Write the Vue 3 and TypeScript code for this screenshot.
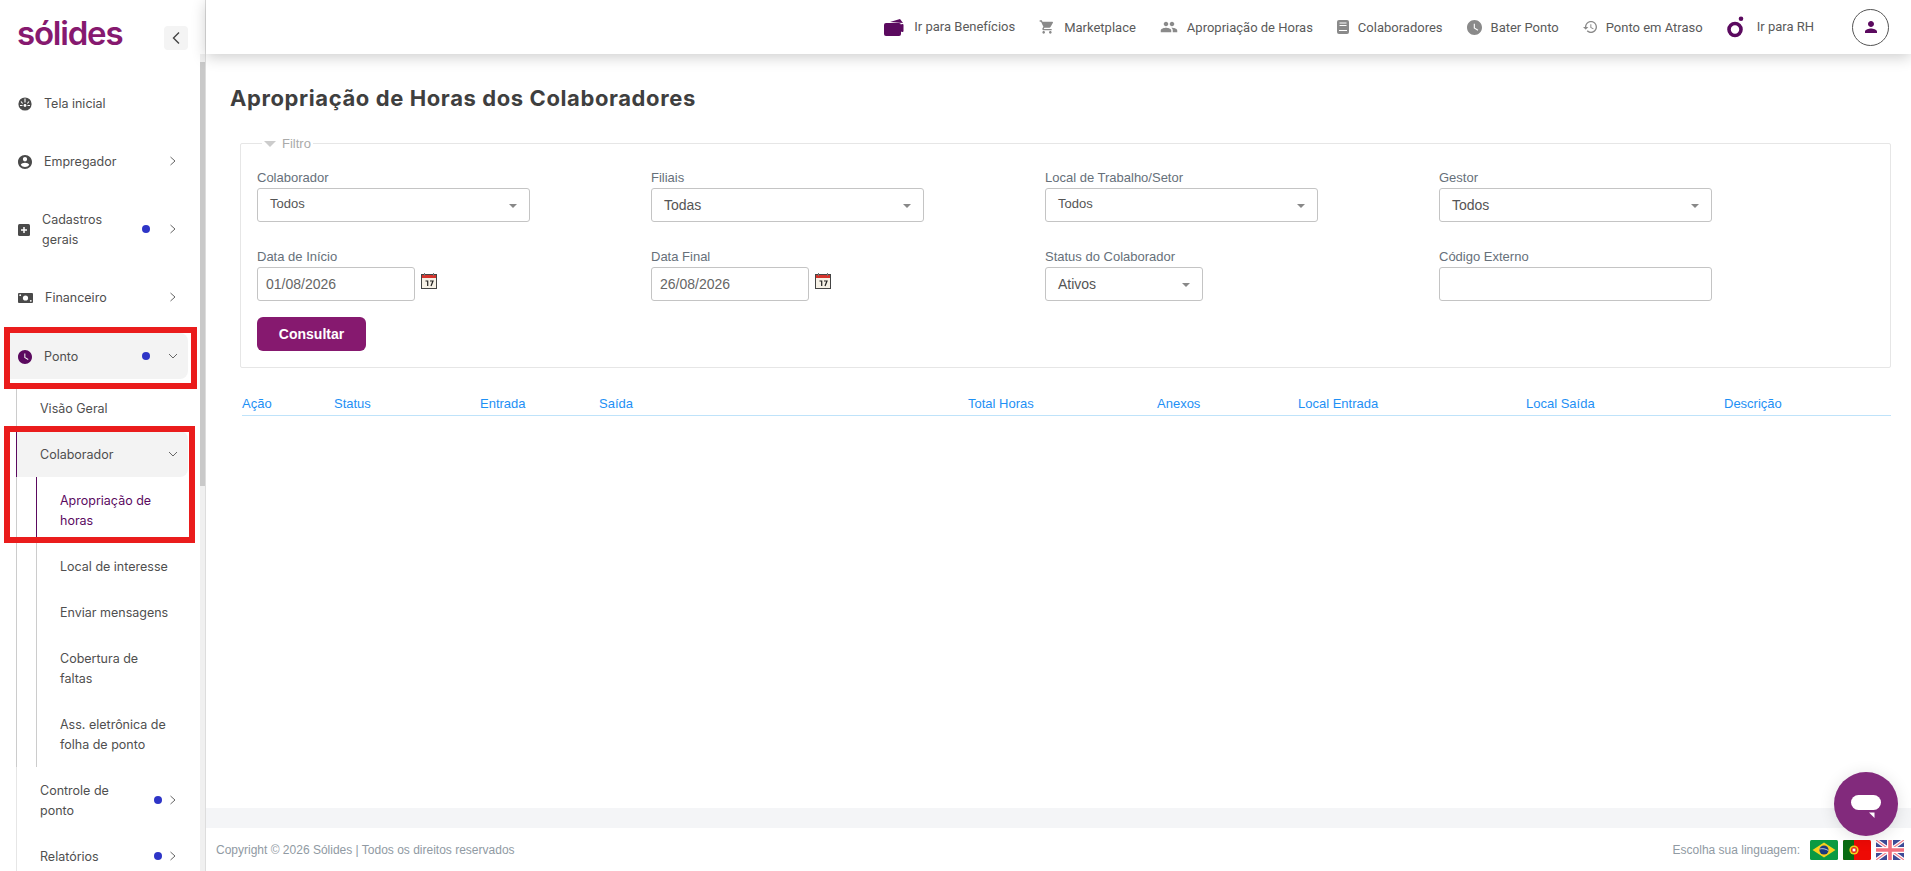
<script setup lang="ts">
type SideItem = {
  label: string
  icon?: string
  dot?: boolean
  chevron?: 'right' | 'down'
  active?: boolean
}

const topItems: SideItem[] = [
  { label: 'Tela inicial', icon: 'gauge' },
  { label: 'Empregador', icon: 'user', chevron: 'right' },
  { label: 'Cadastros gerais', icon: 'plus', dot: true, chevron: 'right' },
  { label: 'Financeiro', icon: 'money', chevron: 'right' }
]

const subItems = ['Local de interesse', 'Enviar mensagens', 'Cobertura de faltas', 'Ass. eletrônica de folha de ponto']

const headers = [
  { label: 'Ação', width: 92 },
  { label: 'Status', width: 146 },
  { label: 'Entrada', width: 119 },
  { label: 'Saída', width: 369 },
  { label: 'Total Horas', width: 189 },
  { label: 'Anexos', width: 141 },
  { label: 'Local Entrada', width: 228 },
  { label: 'Local Saída', width: 198 },
  { label: 'Descrição', width: 120 }
]

const cart = 'M7 18c-1.1 0-1.99.9-1.99 2S5.9 22 7 22s2-.9 2-2-.9-2-2-2zM1 2v2h2l3.6 7.59-1.35 2.45c-.16.28-.25.61-.25.96 0 1.1.9 2 2 2h12v-2H7.42c-.14 0-.25-.11-.25-.25l.03-.12.9-1.63h7.45c.75 0 1.41-.41 1.75-1.03l3.58-6.49c.08-.14.12-.31.12-.48 0-.55-.45-1-1-1H5.21l-.94-2H1zm16 16c-1.1 0-1.99.9-1.99 2s.89 2 1.99 2 2-.9 2-2-.9-2-2-2z'
const people = 'M16 11c1.66 0 2.99-1.34 2.99-3S17.66 5 16 5c-1.66 0-3 1.34-3 3s1.34 3 3 3zm-8 0c1.66 0 2.99-1.34 2.99-3S9.66 5 8 5C6.34 5 5 6.34 5 8s1.34 3 3 3zm0 2c-2.33 0-7 1.17-7 3.5V19h14v-2.5c0-2.33-4.67-3.5-7-3.5zm8 0c-.29 0-.62.02-.97.05 1.16.84 1.97 1.97 1.97 3.45V19h6v-2.5c0-2.33-4.67-3.5-7-3.5z'
const clock = 'M12 2C6.47 2 2 6.48 2 12s4.47 10 10 10 10-4.48 10-10S17.53 2 12 2zm4.2 14.2L11 13V7h1.5v5.25l4.5 2.67-.8 1.28z'
const history = 'M13 3c-4.97 0-9 4.03-9 9H1l3.89 3.89.07.14L9 12H6c0-3.87 3.13-7 7-7s7 3.13 7 7-3.13 7-7 7c-1.93 0-3.68-.79-4.94-2.06l-1.42 1.42C8.27 19.99 10.51 21 13 21c4.97 0 9-4.03 9-9s-4.03-9-9-9zm-1 5v5l4.28 2.54.72-1.21-3.5-2.08V8H12z'
const person = 'M12 12c2.21 0 4-1.79 4-4s-1.79-4-4-4-4 1.79-4 4 1.79 4 4 4zm0 2c-2.67 0-8 1.34-8 4v2h16v-2c0-2.66-5.33-4-8-4z'
const userCircle = 'M12 2C6.48 2 2 6.48 2 12s4.48 10 10 10 10-4.48 10-10S17.52 2 12 2zm0 3c1.66 0 3 1.34 3 3s-1.34 3-3 3-3-1.34-3-3 1.34-3 3-3zm0 14.2c-2.5 0-4.71-1.28-6-3.22.03-1.99 4-3.08 6-3.08 1.99 0 5.97 1.09 6 3.08-1.29 1.94-3.5 3.22-6 3.22z'
</script>

<template>
  <div class="app">
    <aside class="sidebar">
      <div class="brand">
        <span class="logo">sólides</span>
        <button class="collapse">
          <svg width="10" height="14" viewBox="0 0 10 14"><path d="M8 1.5 2.5 7 8 12.5" fill="none" stroke="#444" stroke-width="1.4" /></svg>
        </button>
      </div>
      <nav class="menu">
        <div v-for="item in topItems" :key="item.label" class="menu-item">
          <span class="menu-icon">
            <svg v-if="item.icon === 'gauge'" width="14" height="14" viewBox="0 0 14 14">
              <circle cx="7" cy="7" r="6.6" fill="#4a4a4a" />
              <path d="M7 1.5v4M3 4.5l1.6 2M11 4.5 9.4 6.5M2 8.5h2.5M9.5 8.5H12" stroke="#fff" stroke-width="1.1" />
              <circle cx="7" cy="8.5" r="1.4" fill="#fff" />
            </svg>
            <svg v-else-if="item.icon === 'user'" width="14" height="14" viewBox="2 2 20 20"><path :d="userCircle" fill="#4a4a4a" /></svg>
            <svg v-else-if="item.icon === 'plus'" width="12" height="12" viewBox="0 0 12 12">
              <rect width="12" height="12" rx="1.5" fill="#4a4a4a" />
              <path d="M6 3v6M3 6h6" stroke="#fff" stroke-width="1.5" />
            </svg>
            <svg v-else width="15" height="10" viewBox="0 0 15 10">
              <rect width="15" height="10" rx="1" fill="#4a4a4a" />
              <circle cx="7.5" cy="5" r="2.6" fill="#fff" />
              <circle cx="2.2" cy="2.2" r="0.9" fill="#fff" />
              <circle cx="12.8" cy="7.8" r="0.9" fill="#fff" />
            </svg>
          </span>
          <span class="menu-label">{{ item.label }}</span>
          <span v-if="item.dot" class="dot"></span>
          <svg v-if="item.chevron" class="chev" width="8" height="10" viewBox="0 0 8 10"><path d="M1.5 1 6 5 1.5 9" fill="none" stroke="#666" stroke-width="1" /></svg>
        </div>

        <div class="menu-item open">
          <span class="menu-icon">
            <svg width="14" height="14" viewBox="2 2 20 20"><path :d="clock" fill="#5b0a5f" /></svg>
          </span>
          <span class="menu-label">Ponto</span>
          <span class="dot"></span>
          <svg class="chev down" width="10" height="8" viewBox="0 0 10 8"><path d="M1 2 5 6 9 2" fill="none" stroke="#666" stroke-width="1" /></svg>
        </div>

        <div class="sub">
          <div class="sub-row">Visão Geral</div>
          <div class="sub-row open-sub">
            <span class="menu-label">Colaborador</span>
            <svg class="chev down" width="10" height="8" viewBox="0 0 10 8"><path d="M1 2 5 6 9 2" fill="none" stroke="#666" stroke-width="1" /></svg>
          </div>
          <div class="subsub">
            <div class="leaf current">Apropriação de horas</div>
            <div v-for="s in subItems" :key="s" class="leaf">{{ s }}</div>
          </div>
        </div>

        <div class="sub-row after">
          <span class="menu-label wrap">Controle de ponto</span>
          <span class="dot"></span>
          <svg class="chev" width="8" height="10" viewBox="0 0 8 10"><path d="M1.5 1 6 5 1.5 9" fill="none" stroke="#666" stroke-width="1" /></svg>
        </div>
        <div class="sub-row after">
          <span class="menu-label wrap">Relatórios</span>
          <span class="dot"></span>
          <svg class="chev" width="8" height="10" viewBox="0 0 8 10"><path d="M1.5 1 6 5 1.5 9" fill="none" stroke="#666" stroke-width="1" /></svg>
        </div>
      </nav>
      <div class="scrollbar"><div class="thumb"></div></div>
      <div class="mark mark-a"></div>
      <div class="mark mark-b"></div>
    </aside>

    <div class="main">
      <header class="topbar">
        <a class="top-link strong">
          <svg width="21" height="17" viewBox="0 0 21 17">
            <path d="M6 3 16 0l3 4z" fill="#5b0a5f" />
            <rect x="0" y="4" width="17" height="13" rx="2" fill="#5b0a5f" />
            <rect x="17" y="5" width="2.5" height="8" rx="1" fill="#5b0a5f" />
          </svg>
          <span class="raise">Ir para Benefícios</span>
        </a>
        <a class="top-link"><svg width="16" height="16" viewBox="0 0 24 24"><path :d="cart" fill="#8a8a8a" /></svg>Marketplace</a>
        <a class="top-link"><svg width="18" height="18" viewBox="0 0 24 24"><path :d="people" fill="#8a8a8a" /></svg>Apropriação de Horas</a>
        <a class="top-link">
          <svg width="12" height="14" viewBox="0 0 12 14">
            <rect width="12" height="14" rx="2" fill="#8a8a8a" />
            <path d="M2.5 3h7M2.5 5.5h7M2 10.5h8" stroke="#fff" stroke-width="1" />
          </svg>Colaboradores
        </a>
        <a class="top-link"><svg width="15" height="15" viewBox="2 2 20 20"><path :d="clock" fill="#8a8a8a" /></svg>Bater Ponto</a>
        <a class="top-link"><svg width="14" height="14" viewBox="1 3 21 18"><path :d="history" fill="#8a8a8a" /></svg>Ponto em Atraso</a>
        <a class="top-link ring">
          <svg width="18" height="22" viewBox="0 0 18 22">
            <circle cx="8" cy="13.5" r="6" fill="none" stroke="#5b0a5f" stroke-width="3.6" />
            <circle cx="14" cy="2.8" r="2.3" fill="#5b0a5f" />
          </svg>
          <span class="raise">Ir para RH</span>
        </a>
        <div class="avatar"><svg width="18" height="18" viewBox="0 0 24 24"><path :d="person" fill="#5b0a5f" /></svg></div>
      </header>

      <main class="content">
        <h1 class="title">Apropriação de Horas dos Colaboradores</h1>

        <fieldset class="filter">
          <legend><span class="caret"></span>Filtro</legend>
          <div class="grid">
            <div class="field">
              <label>Colaborador</label>
              <div class="select wide small"><span>Todos</span><i></i></div>
            </div>
            <div class="field">
              <label>Filiais</label>
              <div class="select wide"><span>Todas</span><i></i></div>
            </div>
            <div class="field">
              <label>Local de Trabalho/Setor</label>
              <div class="select wide small"><span>Todos</span><i></i></div>
            </div>
            <div class="field">
              <label>Gestor</label>
              <div class="select wide"><span>Todos</span><i></i></div>
            </div>

            <div class="field">
              <label>Data de Início</label>
              <div class="date">
                <div class="input">01/08/2026</div>
                <svg width="16" height="16" viewBox="0 0 16 16">
                  <rect x="0.5" y="1.5" width="15" height="14" fill="#f6f1e6" stroke="#444" />
                  <rect x="1" y="2" width="14" height="3" fill="#d5332c" />
                  <path d="M3.5 0v3M12.5 0v3" stroke="#777" />
                  <path d="M4.5 8h2.2v5M9 8h3l-2 5" fill="none" stroke="#222" stroke-width="1.2" />
                </svg>
              </div>
            </div>
            <div class="field">
              <label>Data Final</label>
              <div class="date">
                <div class="input">26/08/2026</div>
                <svg width="16" height="16" viewBox="0 0 16 16">
                  <rect x="0.5" y="1.5" width="15" height="14" fill="#f6f1e6" stroke="#444" />
                  <rect x="1" y="2" width="14" height="3" fill="#d5332c" />
                  <path d="M3.5 0v3M12.5 0v3" stroke="#777" />
                  <path d="M4.5 8h2.2v5M9 8h3l-2 5" fill="none" stroke="#222" stroke-width="1.2" />
                </svg>
              </div>
            </div>
            <div class="field">
              <label>Status do Colaborador</label>
              <div class="select narrow"><span>Ativos</span><i></i></div>
            </div>
            <div class="field">
              <label>Código Externo</label>
              <div class="input blank"></div>
            </div>
          </div>
          <button class="primary">Consultar</button>
        </fieldset>

        <div class="thead">
          <span v-for="h in headers" :key="h.label" :style="{ width: h.width + 'px' }">{{ h.label }}</span>
        </div>
      </main>

      <div class="band"></div>
      <footer class="footer">
        <span>Copyright © 2026 Sólides | Todos os direitos reservados</span>
        <div class="langs">
          <span>Escolha sua linguagem:</span>
          <svg class="flag" viewBox="0 0 28 20">
            <rect width="28" height="20" rx="1.5" fill="#0a9a42" />
            <path d="M14 2.5 25.5 10 14 17.5 2.5 10z" fill="#f7d11e" />
            <circle cx="14" cy="10" r="4.6" fill="#1c3a7c" />
            <path d="M9.6 9c3-.8 6-.2 8.8 1.6" stroke="#fff" stroke-width="0.7" fill="none" />
          </svg>
          <svg class="flag" viewBox="0 0 28 20">
            <rect width="28" height="20" rx="1.5" fill="#ee0a05" />
            <path d="M1.5 0H11v20H1.5A1.5 1.5 0 0 1 0 18.5v-17A1.5 1.5 0 0 1 1.5 0z" fill="#0a6b12" />
            <circle cx="11" cy="10" r="4.6" fill="#f5d11e" />
            <circle cx="11" cy="10" r="3" fill="#e42518" />
            <rect x="9.6" y="8.6" width="2.8" height="2.8" fill="#fff" />
          </svg>
          <svg class="flag" viewBox="0 0 28 20">
            <rect width="28" height="20" rx="1.5" fill="#3e4a96" />
            <path d="M0 0 28 20M28 0 0 20" stroke="#fff" stroke-width="3.5" />
            <path d="M0 0 28 20M28 0 0 20" stroke="#f27e8c" stroke-width="1.2" />
            <path d="M14 0v20M0 10h28" stroke="#fff" stroke-width="6" />
            <path d="M14 0v20M0 10h28" stroke="#f2707f" stroke-width="3.6" />
          </svg>
        </div>
      </footer>
    </div>

    <button class="chat">
      <svg width="32" height="24" viewBox="0 0 32 24">
        <rect x="1" y="1" width="30" height="15" rx="7.5" fill="#fff" />
        <path d="M19 18.5h5.5V24z" fill="#fff" />
      </svg>
    </button>
  </div>
</template>

<style scoped>
.app {
  display: flex;
  height: 871px;
  overflow: hidden;
  position: relative;
  font-family: "Liberation Sans", Arial, sans-serif;
  color: #555;
  background: #fff;
}

.sidebar {
  position: relative;
  flex: 0 0 206px;
  box-sizing: border-box;
  border-right: 1px solid #ddd;
  overflow: hidden;
  font-family: Inter, "Open Sans", sans-serif;
  font-size: 12.5px;
  line-height: 20px;
  color: #4f4f4f;
  background: #fff;
}

.brand {
  height: 80px;
  display: flex;
  align-items: flex-start;
  justify-content: space-between;
  padding: 13px 17px 0 17px;
  box-sizing: border-box;
}

.logo {
  font-family: Inter, sans-serif;
  font-weight: 600;
  font-size: 33px;
  line-height: 40px;
  color: #86196f;
  letter-spacing: -1.2px;
}

.collapse {
  width: 24px;
  height: 24px;
  margin-top: 13px;
  border: 0;
  padding: 0;
  border-radius: 4px;
  background: #f4f4f4;
  display: flex;
  align-items: center;
  justify-content: center;
}

.menu {
  width: 188px;
  display: flex;
  flex-direction: column;
}

.menu-item {
  display: flex;
  align-items: center;
  box-sizing: border-box;
  padding: 14px 28px 12px 18px;
  margin-bottom: 12px;
  position: relative;
}

.menu-icon {
  margin-right: 12px;
  display: flex;
  align-items: center;
}

.menu-label {
  flex: 1;
}

.menu-item .menu-label {
  max-width: 75px;
}

.menu-item .dot {
  position: absolute;
  left: 142px;
  top: 50%;
  margin-top: -4px;
}

.chev {
  position: absolute;
  right: 11px;
  top: 50%;
  transform: translateY(-50%);
}

.chev.down {
  right: 10px;
}

.dot {
  width: 8px;
  height: 8px;
  border-radius: 50%;
  background: #2e35c7;
}

.menu-item.open {
  margin: 1px 0 6px 10px;
  padding-left: 8px;
  border-radius: 0 8px 8px 0;
  background: #f3f3f3;
}

.menu-item.open .dot {
  left: 132px;
}

.sub {
  margin-left: 16px;
  border-left: 1px solid #ccc;
}

.sub-row {
  position: relative;
  display: flex;
  align-items: center;
  padding: 14px 28px 12px 23px;
  box-sizing: border-box;
}

.open-sub {
  margin-left: -1px;
  border-left: 1px solid #5b0a5f;
  border-radius: 0 8px 8px 0;
  background: #f3f3f3;
}

.subsub {
  margin-left: 19px;
  border-left: 1px solid #ccc;
}

.leaf {
  padding: 14px 16px 12px 23px;
}

.leaf.current {
  margin-left: -1px;
  border-left: 1px solid #5b0a5f;
  color: #5b0a5f;
}

.after {
  margin-left: 16px;
  border-left: 1px solid #e6e6e6;
}

.after .wrap {
  max-width: 80px;
  flex: 0 0 80px;
}

.after .dot {
  position: absolute;
  left: 137px;
  top: 50%;
  margin-top: -4px;
}

.scrollbar {
  position: absolute;
  top: 54px;
  right: 0;
  bottom: 0;
  width: 5px;
  background: #f0f0f0;
}

.thumb {
  height: 424px;
  margin-top: 8px;
  background: #c9c9c9;
}

.mark {
  position: absolute;
  left: 4px;
  box-sizing: border-box;
  border: 6px solid #ea1c1c;
}

.mark-a {
  top: 327px;
  width: 193px;
  height: 62px;
}

.mark-b {
  top: 426px;
  width: 191px;
  height: 117px;
}

.main {
  flex: 1;
  min-width: 0;
  display: flex;
  flex-direction: column;
}

.topbar {
  flex: 0 0 54px;
  box-sizing: border-box;
  display: flex;
  align-items: center;
  justify-content: flex-end;
  padding-right: 22px;
  gap: 24px;
  background: #fff;
  box-shadow: 0 3px 14px rgba(0, 0, 0, 0.2);
  font-family: Roboto, sans-serif;
  font-size: 13px;
  color: #5a5a5a;
  position: relative;
}

.top-link {
  display: flex;
  align-items: center;
  gap: 9px;
  white-space: nowrap;
}

.top-link.ring {
  gap: 12px;
}

.raise {
  position: relative;
  top: -1px;
}

.avatar {
  width: 37px;
  height: 37px;
  margin-left: 14px;
  box-sizing: border-box;
  border: 1px solid #555;
  border-radius: 50%;
  display: flex;
  align-items: center;
  justify-content: center;
}

.content {
  flex: 1;
  padding: 0 20px 0 24px;
}

.title {
  margin: 30px 0 0;
  font-family: Inter, sans-serif;
  font-weight: 700;
  font-size: 22px;
  line-height: 28px;
  letter-spacing: 0.6px;
  color: #3f3f3f;
}

.filter {
  margin: 24px 0 0 10px;
  padding: 19px 16px 16px;
  border: 1px solid #e6e6e6;
  border-radius: 2px;
  min-width: 0;
}

.filter legend {
  margin-left: 5px;
  padding: 0 2px;
  font-size: 13px;
  line-height: 15px;
  color: #aaa;
  display: flex;
  align-items: center;
  gap: 6px;
}

.caret {
  width: 0;
  height: 0;
  border-left: 6px solid transparent;
  border-right: 6px solid transparent;
  border-top: 6px solid #ccc;
}

.grid {
  display: grid;
  grid-template-columns: repeat(4, 394px);
  row-gap: 27px;
}

.field label {
  display: block;
  font-size: 13px;
  line-height: 16px;
  margin-bottom: 2px;
  color: #66707a;
}

.select,
.input {
  box-sizing: border-box;
  height: 34px;
  border: 1px solid #c4c4c4;
  border-radius: 3px;
  background: #fff;
  font-size: 14px;
  color: #555;
}

.select {
  position: relative;
  display: flex;
  align-items: center;
  padding-left: 12px;
}

.select i {
  position: absolute;
  right: 12px;
  top: 15px;
  width: 0;
  height: 0;
  border-left: 4px solid transparent;
  border-right: 4px solid transparent;
  border-top: 4px solid #888;
}

.wide {
  width: 273px;
}

.narrow {
  width: 158px;
}

.small {
  font-size: 13px;
  align-items: flex-start;
  padding-top: 7px;
}

.date {
  display: flex;
  align-items: flex-start;
  gap: 6px;
}

.date svg {
  margin-top: 6px;
}

.date .input {
  width: 158px;
  line-height: 32px;
  padding-left: 8px;
  color: #666;
}

.input.blank {
  width: 273px;
}

.primary {
  display: block;
  margin-top: 16px;
  width: 109px;
  height: 34px;
  border: 0;
  border-radius: 6px;
  background: #86196f;
  color: #fff;
  font-family: "Liberation Sans", Arial, sans-serif;
  font-weight: 700;
  font-size: 14px;
}

.thead {
  display: flex;
  margin: 28px 0 0 12px;
  padding-bottom: 3px;
  border-bottom: 1px solid #bfe3fa;
  font-size: 13px;
  line-height: 16px;
  color: #1e90f5;
}

.band {
  flex: 0 0 20px;
  background: #f4f5f7;
}

.footer {
  flex: 0 0 43px;
  display: flex;
  align-items: center;
  justify-content: space-between;
  padding: 0 7px 0 10px;
  font-size: 12px;
  color: #909aa3;
}

.langs {
  display: flex;
  align-items: center;
  gap: 5px;
}

.langs span {
  margin-right: 5px;
}

.flag {
  width: 28px;
  height: 20px;
}

.chat {
  position: absolute;
  left: 1834px;
  top: 772px;
  width: 64px;
  height: 64px;
  border: 0;
  border-radius: 50%;
  background: #822a7c;
  box-shadow: 0 2px 16px rgba(0, 0, 0, 0.12);
  display: flex;
  align-items: center;
  justify-content: center;
  padding: 4px 0 0;
}
</style>
